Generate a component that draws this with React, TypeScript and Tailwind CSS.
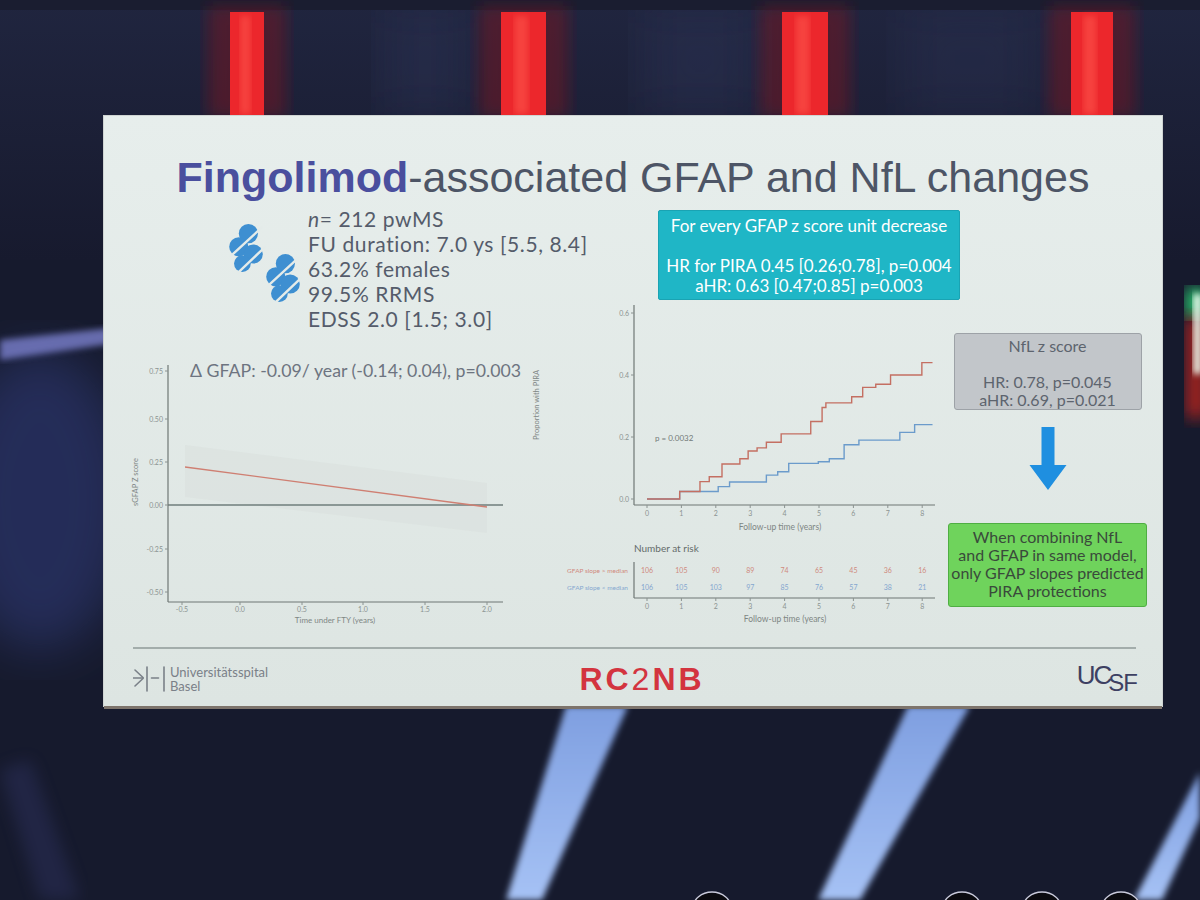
import React from 'react'

const kmX = (t: number) => 117 + t * 34.4
const kmY = (p: number) => 194 - p * 310

const redSteps: [number, number][] = [
  [0, 0], [0.95, 0.024], [1.54, 0.056], [1.81, 0.072], [2.18, 0.113], [2.7, 0.13], [2.94, 0.155],
  [3.2, 0.165], [3.47, 0.183], [3.9, 0.21], [4.76, 0.25], [5.09, 0.295], [5.2, 0.31], [5.95, 0.33],
  [6.27, 0.36], [6.65, 0.37], [7.08, 0.4], [7.99, 0.44],
]
const blueSteps: [number, number][] = [
  [0, 0], [0.95, 0.024], [2.07, 0.04], [2.4, 0.055], [3.47, 0.077], [3.8, 0.088], [4.12, 0.115],
  [4.98, 0.12], [5.3, 0.13], [5.73, 0.175], [6.16, 0.19], [7.35, 0.215], [7.78, 0.24],
]

function stepPath(steps: [number, number][], end: number) {
  let d = `M ${kmX(steps[0][0])} ${kmY(steps[0][1])}`
  for (let i = 1; i < steps.length; i++) {
    d += ` H ${kmX(steps[i][0])} V ${kmY(steps[i][1])}`
  }
  return d + ` H ${kmX(end)}`
}

const riskHigh = [106, 105, 90, 89, 74, 65, 45, 36, 16]
const riskLow = [106, 105, 103, 97, 85, 76, 57, 38, 21]
const lato = "Lato, 'Liberation Sans', sans-serif"

function Backdrop() {
  return (
    <svg className="absolute inset-0" width={1200} height={900} viewBox="0 0 1200 900">
      <defs>
        <filter id="b3"><feGaussianBlur stdDeviation="3" /></filter>
        <filter id="b8"><feGaussianBlur stdDeviation="8" /></filter>
        <filter id="b25"><feGaussianBlur stdDeviation="25" /></filter>
        <linearGradient id="top" x1="0" y1="0" x2="0" y2="1">
          <stop offset="0" stopColor="#20253f" />
          <stop offset="1" stopColor="#171a2e" />
        </linearGradient>
        <linearGradient id="beam" x1="0" y1="0" x2="0" y2="1">
          <stop offset="0" stopColor="#7f9fe0" />
          <stop offset="1" stopColor="#a6c2f5" />
        </linearGradient>
      </defs>
      <rect width="1200" height="900" fill="#161a2d" />
      <rect width="1200" height="260" fill="url(#top)" />
      <rect x="380" y="0" width="90" height="120" fill="#2b3152" opacity="0.5" filter="url(#b25)" />
      <rect x="640" y="0" width="120" height="120" fill="#2b3152" opacity="0.5" filter="url(#b25)" />
      <rect x="900" y="0" width="140" height="120" fill="#2b3152" opacity="0.4" filter="url(#b25)" />
      <rect x="0" y="0" width="1200" height="10" fill="#1a1d30" />
      {[
        [230, 34],
        [501, 45],
        [782, 46],
        [1071, 42],
      ].map(([x, w]) => (
        <g key={x}>
          <rect x={x - 22} y={6} width={w + 44} height={112} fill="#7a1720" opacity="0.5" filter="url(#b8)" />
          <rect x={x} y={12} width={w} height={106} fill="#ec272c" />
          <rect x={x + w * 0.3} y={16} width={w * 0.3} height={98} fill="#ff5a50" opacity="0.55" filter="url(#b3)" />
        </g>
      ))}
      <ellipse cx="40" cy="500" rx="90" ry="150" fill="#3a4899" opacity="0.4" filter="url(#b25)" />
      <polygon points="0,340 110,328 110,344 0,360" fill="#7a80cc" opacity="0.8" filter="url(#b3)" />
      <polygon points="0,770 30,760 80,900 40,900" fill="#3b3f7c" opacity="0.3" filter="url(#b8)" />
      <rect x="1186" y="288" width="20" height="30" fill="#2fe07a" opacity="0.9" filter="url(#b8)" />
      <rect x="1186" y="318" width="20" height="100" fill="#d8261f" opacity="0.75" filter="url(#b8)" />
      <rect x="1193" y="294" width="9" height="80" fill="#eefbef" opacity="0.9" filter="url(#b3)" />
      <polygon points="566,706 628,706 542,900 506,900" fill="url(#beam)" filter="url(#b3)" />
      <polygon points="908,706 970,706 860,900 818,900" fill="url(#beam)" filter="url(#b3)" />
      <polygon points="1200,772 1200,818 1162,900 1134,900" fill="url(#beam)" filter="url(#b3)" />
      {[712, 962, 1042, 1121].map((cx) => (
        <ellipse key={cx} cx={cx} cy={908} rx={19} ry={16} fill="#0b0b10" stroke="#c9cadb" strokeWidth="1.4" />
      ))}
    </svg>
  )
}

function PillShape({ x, y }: { x: number; y: number }) {
  return (
    <g transform={`translate(${x} ${y}) scale(1.2)`}>
      <g fill="#3e8fd1">
        <circle cx="17" cy="8" r="8" />
        <circle cx="9" cy="19" r="8" />
        <circle cx="21" cy="25" r="8" />
        <circle cx="12" cy="33" r="7" />
      </g>
      <g stroke="#e4ebe9" strokeWidth="2" strokeLinecap="round">
        <line x1="28" y1="3" x2="2" y2="27" />
        <line x1="31" y1="19" x2="8" y2="41" />
      </g>
    </g>
  )
}

function PillIcons({ className }: { className?: string }) {
  return (
    <svg className={className} width={80} height={82} viewBox="0 0 80 82">
      <PillShape x={2} y={2} />
      <PillShape x={39} y={32} />
    </svg>
  )
}

function GfapChart({ className }: { className?: string }) {
  const yTicks: [string, number][] = [
    ['0.75', 11], ['0.50', 59], ['0.25', 102], ['0.00', 145], ['-0.25', 189], ['-0.50', 232],
  ]
  const xTicks: [string, number][] = [
    ['-0.5', 52], ['0.0', 110], ['0.5', 172], ['1.0', 233], ['1.5', 295], ['2.0', 357],
  ]
  return (
    <svg className={className} width={400} height={265} viewBox="0 0 400 265" fontFamily={lato}>
      <text x={60} y={17} fontSize={17} fill="#6d7480" textLength={331} lengthAdjust="spacingAndGlyphs">
        Δ GFAP: -0.09/ year (-0.14; 0.04), p=0.003
      </text>
      <polygon points="55,85 357,123 357,173 55,137" fill="#dbe2df" opacity="0.75" />
      <line x1={38} y1={145} x2={373} y2={145} stroke="#6f7e7b" strokeWidth={1.3} />
      <line x1={55} y1={107} x2={357} y2={147} stroke="#cf7f72" strokeWidth={1.3} />
      <line x1={38} y1={5} x2={38} y2={242} stroke="#6f7775" strokeWidth={1.2} />
      <line x1={38} y1={242} x2={373} y2={242} stroke="#6f7775" strokeWidth={1.2} />
      {yTicks.map(([l, y]) => (
        <g key={l}>
          <line x1={35} y1={y} x2={38} y2={y} stroke="#8a9290" />
          <text x={33} y={y + 2.5} fontSize={7} fill="#8b9391" textAnchor="end">{l}</text>
        </g>
      ))}
      {xTicks.map(([l, x]) => (
        <g key={l}>
          <line x1={x} y1={242} x2={x} y2={245} stroke="#8a9290" />
          <text x={x} y={252} fontSize={7} fill="#8b9391" textAnchor="middle">{l}</text>
        </g>
      ))}
      <text x={205} y={263} fontSize={8} fill="#7e8684" textAnchor="middle">Time under FTY (years)</text>
      <text transform="translate(8 122) rotate(-90)" fontSize={7.5} fill="#7e8684" textAnchor="middle">sGFAP Z score</text>
    </svg>
  )
}

function KmChart({ className }: { className?: string }) {
  const yTicks: [string, number][] = [['0.6', 0.6], ['0.4', 0.4], ['0.2', 0.2], ['0.0', 0]]
  const years = [0, 1, 2, 3, 4, 5, 6, 7, 8]
  return (
    <svg className={className} width={410} height={320} viewBox="0 0 410 320" fontFamily={lato}>
      <text transform="translate(9 100) rotate(-90)" fontSize={7.5} fill="#7e8684" textAnchor="middle">Proportion with PIRA</text>
      <line x1={104} y1={0} x2={104} y2={200} stroke="#6f7775" strokeWidth={1.2} />
      <line x1={104} y1={200} x2={405} y2={200} stroke="#6f7775" strokeWidth={1.2} />
      {yTicks.map(([l, p]) => (
        <g key={l}>
          <line x1={101} y1={kmY(p)} x2={104} y2={kmY(p)} stroke="#8a9290" />
          <text x={99} y={kmY(p) + 2.5} fontSize={7} fill="#8b9391" textAnchor="end">{l}</text>
        </g>
      ))}
      {years.map((t) => (
        <g key={t}>
          <line x1={kmX(t)} y1={200} x2={kmX(t)} y2={203} stroke="#8a9290" />
          <text x={kmX(t)} y={211} fontSize={7} fill="#8b9391" textAnchor="middle">{t}</text>
        </g>
      ))}
      <text x={250} y={225} fontSize={8.5} fill="#7e8684" textAnchor="middle">Follow-up time (years)</text>
      <path d={stepPath(blueSteps, 8.3)} fill="none" stroke="#6b9bcb" strokeWidth={1.4} />
      <path d={stepPath(redSteps, 8.3)} fill="none" stroke="#c46f62" strokeWidth={1.4} />
      <text x={125} y={136} fontSize={8} fill="#727a78">p = 0.0032</text>

      <text x={104} y={247} fontSize={10} fill="#646c6a">Number at risk</text>
      <text x={98} y={268} fontSize={6.5} fill="#d08a80" textAnchor="end">GFAP slope &gt; median</text>
      <text x={98} y={285} fontSize={6.5} fill="#86a8d0" textAnchor="end">GFAP slope &lt; median</text>
      <line x1={104} y1={257} x2={104} y2={293} stroke="#6f7775" strokeWidth={1.2} />
      <line x1={104} y1={293} x2={405} y2={293} stroke="#6f7775" strokeWidth={1.2} />
      {years.map((t, i) => (
        <g key={t}>
          <text x={kmX(t)} y={268} fontSize={7} fill="#cf8a7e" textAnchor="middle">{riskHigh[i]}</text>
          <text x={kmX(t)} y={285} fontSize={7} fill="#84a6cf" textAnchor="middle">{riskLow[i]}</text>
          <line x1={kmX(t)} y1={293} x2={kmX(t)} y2={296} stroke="#8a9290" />
          <text x={kmX(t)} y={304} fontSize={7} fill="#8b9391" textAnchor="middle">{t}</text>
        </g>
      ))}
      <text x={255} y={317} fontSize={8.5} fill="#7e8684" textAnchor="middle">Follow-up time (years)</text>
    </svg>
  )
}

function DownArrow() {
  return (
    <svg width={40} height={63} viewBox="0 0 40 63">
      <path d="M13.5 0 H26.5 V38 H38.5 L20 63 L1.5 38 H13.5 Z" fill="#1f8fe0" />
    </svg>
  )
}

function BaselMark() {
  return (
    <svg width={34} height={26} viewBox="0 0 34 26" className="shrink-0">
      <g stroke="#7a8088" strokeWidth={1.6} strokeLinecap="round" fill="none">
        <line x1={2} y1={4} x2={10} y2={11.5} />
        <line x1={0.5} y1={12} x2={10} y2={12} />
        <line x1={2} y1={20} x2={10} y2={12.5} />
        <line x1={14} y1={1} x2={14} y2={25} />
        <line x1={18.5} y1={12} x2={25.5} y2={12} />
        <line x1={31} y1={1} x2={31} y2={25} />
      </g>
    </svg>
  )
}

export default function App() {
  return (
    <div className="relative w-[1200px] h-[900px] overflow-hidden bg-[#161a2d] pt-[116px] pl-[104px]">
      <Backdrop />
      <div className="relative w-[1058px] h-[590px] flex flex-col bg-linear-to-b from-[#e7eeec] to-[#dde5e2] shadow-[0_3px_0_#7d746c,0_0_0_1px_#cfd4d2]">
        <h1 className="pt-[40px] h-[84px] text-center text-[43px] leading-[43px] font-['Liberation_Sans',Arial,sans-serif] text-[#4d5566] whitespace-nowrap">
          <span className="font-bold text-[#4a4f9e]">Fingolimod</span>-associated GFAP and NfL changes
        </h1>

        <div className="flex h-[447px]">
          <div className="w-[426px] shrink-0 flex flex-col">
            <div className="flex items-start">
              <PillIcons className="ml-[122px] mt-[22px] shrink-0" />
              <div className="ml-[2px] mt-[6px] shrink-0 text-[21px] leading-[25px] tracking-[0.6px] text-[#555c6b] font-['Lato',sans-serif] whitespace-nowrap">
                <div><i>n</i>= 212 pwMS</div>
                <div>FU duration: 7.0 ys [5.5, 8.4]</div>
                <div>63.2% females</div>
                <div>99.5% RRMS</div>
                <div>EDSS 2.0 [1.5; 3.0]</div>
              </div>
            </div>
            <GfapChart className="ml-[26px] mt-[29px] shrink-0" />
          </div>

          <div className="w-[418px] shrink-0 flex flex-col">
            <div className="ml-[128px] mt-[10px] w-[302px] h-[90px] pt-[5px] bg-[#1fb6c6] border border-[#1aa3b3] rounded-[2px] text-center text-white text-[17px] leading-[20px] font-['Lato',sans-serif] whitespace-nowrap">
              <div>For every GFAP z score unit decrease</div>
              <div>&nbsp;</div>
              <div>HR for PIRA 0.45 [0.26;0.78], p=0.004</div>
              <div>aHR: 0.63 [0.47;0.85] p=0.003</div>
            </div>
            <KmChart className="mt-[5px] shrink-0" />
          </div>

          <div className="w-[199px] shrink-0 flex flex-col items-center">
            <div className="mt-[133px] w-[188px] h-[77px] pt-[3px] bg-[#c2c6ca] border border-[#9da2a7] rounded-[3px] text-center text-[16px] leading-[18px] text-[#5d646e] font-['Lato',sans-serif]">
              <div>NfL z score</div>
              <div>&nbsp;</div>
              <div>HR: 0.78, p=0.045</div>
              <div>aHR: 0.69, p=0.021</div>
            </div>
            <div className="mt-[17px]">
              <DownArrow />
            </div>
            <div className="mt-[33px] w-[199px] h-[84px] pt-[4px] bg-[#6fd35c] border border-[#4fae43] rounded-[3px] text-center text-[16px] leading-[18px] text-[#3a4a3b] font-['Lato',sans-serif] whitespace-nowrap">
              <div>When combining NfL</div>
              <div>and GFAP in same model,</div>
              <div>only GFAP slopes predicted</div>
              <div>PIRA protections</div>
            </div>
          </div>
        </div>

        <div className="ml-[29px] mr-[26px] h-[2px] bg-[#a3adab]" />
        <div className="mt-[13px] ml-[29px] mr-[25px] grid grid-cols-3 items-center">
          <div className="flex items-center gap-[3px] justify-self-start">
            <BaselMark />
            <div className="text-[13px] leading-[14px] text-[#7a8088] font-['Lato',sans-serif] whitespace-nowrap">
              <div>Universitätsspital</div>
              <div>Basel</div>
            </div>
          </div>
          <div className="justify-self-center ml-[14px] text-[32px] leading-none tracking-[3px] text-[#d3343f] font-['Liberation_Sans',Arial,sans-serif]">
            <span className="font-bold">RC</span>2<span className="font-bold">NB</span>
          </div>
          <div className="justify-self-end flex items-start text-[#3d4062] font-['Liberation_Sans',Arial,sans-serif]">
            <span className="text-[26px] leading-none tracking-[-2px]">UC</span>
            <span className="text-[24px] leading-none tracking-[-1px] mt-[9px] -ml-[2px]">SF</span>
          </div>
        </div>
      </div>
    </div>
  )
}
